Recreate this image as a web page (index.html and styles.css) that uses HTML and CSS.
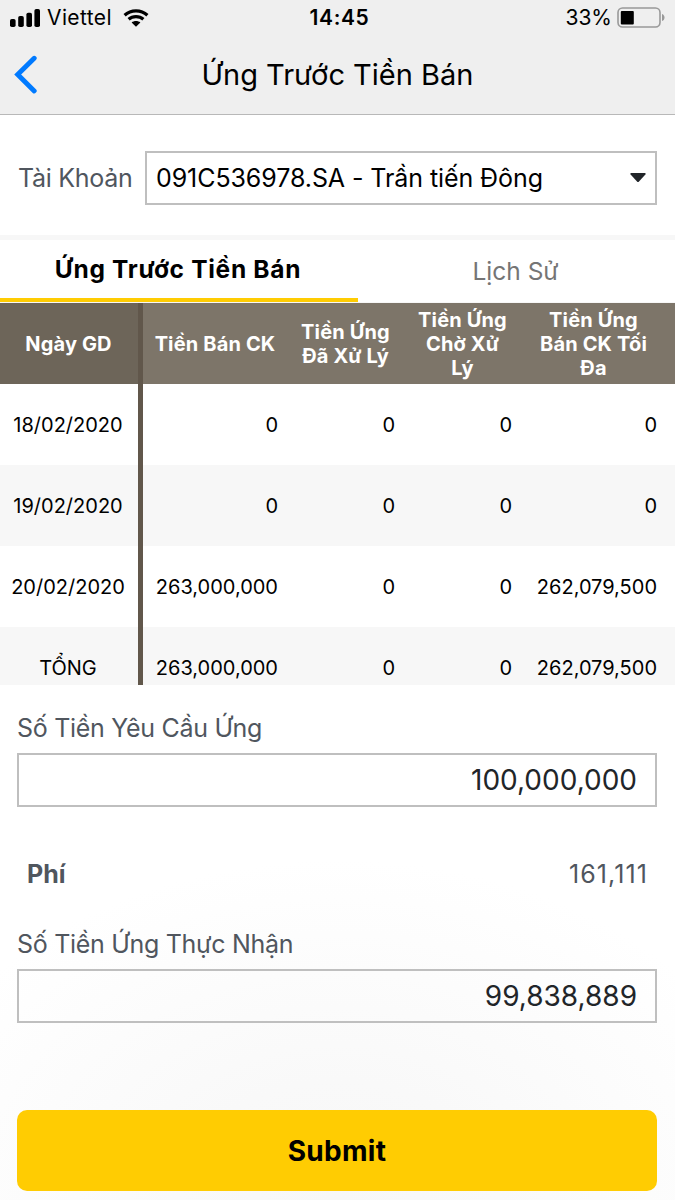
FILE: index.html
```
<!DOCTYPE html>
<html lang="vi">
  <head>
    <meta charset="UTF-8" />
    <meta name="viewport" content="width=device-width, initial-scale=1.0" />
    <title>Ứng Trước Tiền Bán</title>
    <link rel="stylesheet" href="styles.css">
  </head>
  <body>
    <header class="header">
      <div class="status-bar">
        <div class="status-left">
          <svg class="signal" width="30" height="18" viewBox="0 0 30 18">
            <rect x="0" y="10" width="5.6" height="8" rx="1.8" />
            <rect x="8.2" y="7" width="5.6" height="11" rx="1.8" />
            <rect x="16.4" y="3.8" width="5.6" height="14.2" rx="1.8" />
            <rect x="24.4" y="0" width="5.6" height="18" rx="1.8" />
          </svg>
          <span class="carrier">Viettel</span>
          <svg class="wifi" width="26" height="18" viewBox="0 0 26 18">
            <path d="M1.6 6.2C8 .3 18 .3 24.4 6.2M5.6 10.3C9.8 6.6 16.2 6.6 20.4 10.3" fill="none" stroke="#000" stroke-width="3.2" />
            <path d="M8.6 13.4C11 11.4 15 11.4 17.4 13.4L13 17.8Z" />
          </svg>
        </div>
        <span class="clock">14:45</span>
        <div class="status-right">
          <span class="percent">33%</span>
          <svg class="battery" width="49" height="21" viewBox="0 0 49 21">
            <rect x="1" y="1" width="42" height="19" rx="4.5" fill="none" stroke="#999" stroke-width="1.6" />
            <rect x="3.8" y="4" width="13" height="13.4" rx="1" />
            <path d="M45 7c3.4 1 3.4 6 0 7z" fill="#999" />
          </svg>
        </div>
      </div>
      <div class="nav-bar">
        <a class="back" href="#" aria-label="Back">
          <svg width="26" height="40" viewBox="0 0 26 40">
            <path d="M21.2 4.3L4.7 20.6L21.2 36.9" fill="none" stroke="#007aff" stroke-width="4.9" stroke-linecap="round" />
          </svg>
        </a>
        <h1>Ứng Trước Tiền Bán</h1>
      </div>
    </header>

    <div class="account">
      <span class="label account-label">Tài Khoản</span>
      <div class="select">
        <span class="select-value">091C536978.SA - Trần tiến Đông</span>
        <svg width="16" height="10" viewBox="0 0 16 10">
          <path d="M1.2 0H14.8Q16.2.4 15.4 1.6L9 8.6Q8 9.6 7 8.6L.6 1.6Q-.2.4 1.2 0Z" fill="#212529" />
        </svg>
      </div>
    </div>

    <nav class="tabs">
      <a class="tab active" href="#"><span>Ứng Trước Tiền Bán</span></a>
      <a class="tab" href="#"><span>Lịch Sử</span></a>
    </nav>

    <div class="table-wrap">
      <div class="row head">
        <div class="cell date">Ngày GD</div>
        <div class="cell">Tiền Bán CK</div>
        <div class="cell">Tiền Ứng<br>Đã Xử Lý</div>
        <div class="cell">Tiền Ứng<br>Chờ Xử<br>Lý</div>
        <div class="cell">Tiền Ứng<br>Bán CK Tối<br>Đa</div>
      </div>
      <div class="row">
        <div class="cell date">18/02/2020</div>
        <div class="cell">0</div>
        <div class="cell">0</div>
        <div class="cell">0</div>
        <div class="cell">0</div>
      </div>
      <div class="row even">
        <div class="cell date">19/02/2020</div>
        <div class="cell">0</div>
        <div class="cell">0</div>
        <div class="cell">0</div>
        <div class="cell">0</div>
      </div>
      <div class="row">
        <div class="cell date">20/02/2020</div>
        <div class="cell">263,000,000</div>
        <div class="cell">0</div>
        <div class="cell">0</div>
        <div class="cell">262,079,500</div>
      </div>
      <div class="row even">
        <div class="cell date">TỔNG</div>
        <div class="cell">263,000,000</div>
        <div class="cell">0</div>
        <div class="cell">0</div>
        <div class="cell">262,079,500</div>
      </div>
    </div>

    <form class="form">
      <label class="label" for="amount">Số Tiền Yêu Cầu Ứng</label>
      <input class="amount" type="text" id="amount" value="100,000,000" />
      <div class="fee">
        <span class="fee-label">Phí</span>
        <span class="fee-value">161,111</span>
      </div>
      <label class="label" for="received">Số Tiền Ứng Thực Nhận</label>
      <input class="amount" type="text" id="received" value="99,838,889" />
      <button class="submit" type="button">Submit</button>
    </form>
  </body>
</html>
```
FILE: styles.css
```
* {
  box-sizing: border-box;
  margin: 0;
  padding: 0;
}

body {
  width: 675px;
  height: 1200px;
  overflow: hidden;
  font-family: Inter, "Liberation Sans", sans-serif;
  color: #000;
  background: radial-gradient(ellipse 460px 340px at 50% 100%, #f7f7f7 0%, #f9f9f9 35%, #fff 100%) #fff;
}

a {
  color: inherit;
  text-decoration: none;
}

.header {
  height: 115px;
  background: #efefef;
  border-bottom: 1px solid #b8b8b8;
}

.status-bar {
  display: grid;
  grid-template-columns: 1fr auto 1fr;
  align-items: center;
  height: 35px;
  padding: 0 10px;
  font-size: 21px;
}

.status-left,
.status-right {
  display: flex;
  align-items: center;
}

.status-right {
  justify-content: flex-end;
}

.carrier {
  margin: 0 11px 0 7px;
  letter-spacing: 0.4px;
}

.clock {
  padding-left: 4px;
  font-weight: 600;
  letter-spacing: 0.6px;
}

.percent {
  margin-right: 5px;
}

.battery {
  margin-right: -1px;
}

.nav-bar {
  display: grid;
  grid-template-columns: 40px 1fr 40px;
  align-items: center;
  height: 78px;
  padding: 0 13px;
}

.back {
  display: flex;
}

h1 {
  font-size: 29px;
  font-weight: 400;
  text-align: center;
}

.account {
  display: flex;
  align-items: center;
  height: 120px;
  padding: 6px 18px 0;
}

.label {
  color: #50565e;
  font-size: 25px;
  line-height: 32px;
  letter-spacing: -0.3px;
}

.account-label {
  width: 127px;
}

.select {
  display: flex;
  flex: 1;
  align-items: center;
  justify-content: space-between;
  height: 54px;
  padding: 0 9px;
  background: #fff;
  border: 2px solid #bfbfbf;
  font-size: 25px;
  letter-spacing: -0.08px;
}

.tabs {
  display: flex;
  height: 68px;
  border-top: 5px solid #f7f7f7;
  border-bottom: 1px solid #f7f7f7;
}

.tab {
  display: flex;
  flex: 1;
  align-items: center;
  justify-content: center;
  height: 62px;
  padding-right: 2px;
  padding-bottom: 1px;
  color: #757575;
  font-size: 24.5px;
}

.tab.active {
  flex: 0 0 358px;
  color: #000;
  font-weight: 700;
  letter-spacing: 0.7px;
  border-bottom: 4px solid #ffcc02;
}

.table-wrap {
  height: 382px;
  overflow: hidden;
  font-size: 20px;
}

.row {
  display: grid;
  grid-template-columns: 143px 144px 117px 117px 145px;
  height: 81px;
}

.cell {
  display: flex;
  align-items: center;
  justify-content: flex-end;
  padding-right: 9px;
}

.cell.date {
  justify-content: center;
  padding: 0 2px 0 0;
  border-right: 5px solid #61574b;
}

.even {
  background: #f7f7f7;
}

.head {
  color: #fff;
  background: #7d7569;
  font-weight: 700;
  line-height: 24px;
  letter-spacing: 0.15px;
  text-align: center;
}

.head .cell {
  justify-content: center;
  padding: 0;
}

.head .date {
  padding-right: 1px;
  background: #6d6559;
}

.form {
  display: flex;
  flex-direction: column;
  padding: 27px 18px 0 17px;
}

.amount {
  height: 54px;
  margin-top: 9px;
  padding: 0 18px;
  background: transparent;
  border: 2px solid #bfbfbf;
  color: #212529;
  font-family: inherit;
  font-size: 28px;
  text-align: right;
}

.fee {
  display: flex;
  align-items: center;
  justify-content: space-between;
  height: 121px;
  padding: 12px 9px 0 10px;
  color: #50565e;
  font-size: 25px;
}

.fee-label {
  font-weight: 700;
}

.fee-value {
  letter-spacing: 1.1px;
}

.submit {
  height: 81px;
  margin-top: 87px;
  background: #ffcc02;
  border: none;
  border-radius: 10px;
  color: #000;
  font-family: inherit;
  font-size: 28px;
  font-weight: 700;
  letter-spacing: 0.3px;
}
```
